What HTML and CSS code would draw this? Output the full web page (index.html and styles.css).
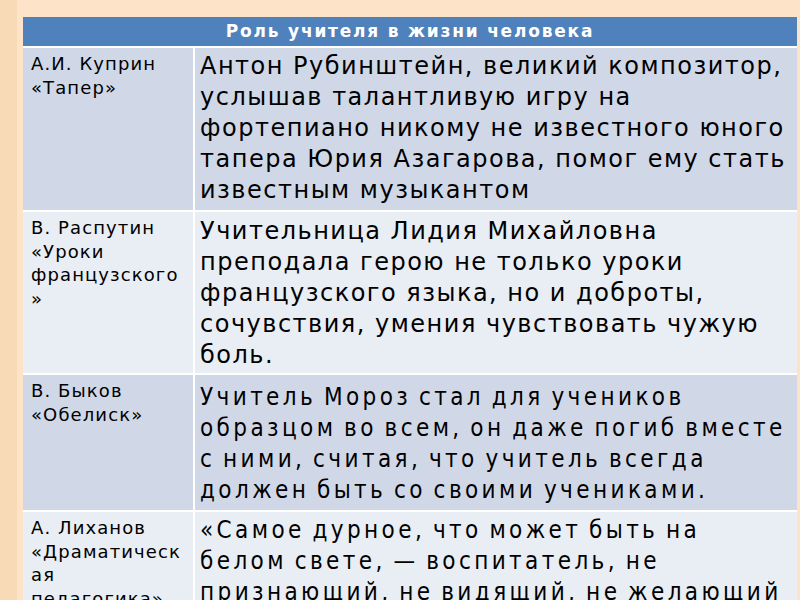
FILE: index.html
```html
<!DOCTYPE html>
<html lang="ru">
<head>
<meta charset="utf-8">
<link rel="stylesheet" href="styles.css">
</head>
<body>
<div class="page">
  <div class="edge"></div>
  <div class="table">
    <div class="head">Роль учителя в жизни человека</div>

    <div class="cell left dark">А.И. Куприн «Тапер»</div>
    <div class="cell right dark">Антон Рубинштейн, великий композитор, услышав талантливую игру на фортепиано никому не известного юного тапера Юрия Азагарова, помог ему стать известным музыкантом</div>

    <div class="cell left light">В. Распутин «Уроки французского»</div>
    <div class="cell right light r2">Учительница Лидия Михайловна преподала герою не только уроки французского языка, но и доброты, сочувствия, умения чувствовать чужую боль.</div>

    <div class="cell left dark">В. Быков «Обелиск»</div>
    <div class="cell right dark cond r3">Учитель Мороз стал для учеников<br>образцом во всем, он даже погиб вместе<br>с ними, считая, что учитель всегда<br>должен быть со своими учениками.</div>

    <div class="cell left light">А. Лиханов «Драматическая педагогика»</div>
    <div class="cell right light cond">«Самое дурное, что может быть на<br>белом свете, — воспитатель, не<br>признающий, не видящий, не желающий</div>
  </div>
</div>
</body>
</html>
```

FILE: styles.css
```css
html, body {
  margin: 0;
  padding: 0;
  width: 800px;
  height: 600px;
  overflow: hidden;
  background: #fde4c8;
}

.page {
  display: flex;
  height: 600px;
  padding-top: 17px;
  box-sizing: border-box;
}

.edge {
  width: 17px;
  margin-top: -17px;
  margin-right: 6px;
  background: #f9dab6;
}

.table {
  width: 774px;
  display: grid;
  grid-template-columns: 170px 602px;
  grid-template-rows: 29px 162px 161px 135px 1fr;
  gap: 2px;
  background: #ffffff;
  font-family: "DejaVu Sans", sans-serif;
  color: #000;
}

.head {
  grid-column: 1 / 3;
  background: #4f81bd;
  color: #ffffff;
  font-weight: bold;
  font-size: 17px;
  line-height: 29px;
  text-align: center;
  letter-spacing: 1.8px;
}

.cell {
  overflow: hidden;
}

.dark { background: #d0d8e8; }
.light { background: #e9edf4; }

.left {
  font-size: 18px;
  line-height: 23.5px;
  padding: 4px 6px 0 8px;
  letter-spacing: 1.1px;
  overflow-wrap: break-word;
}

.right {
  font-size: 24px;
  line-height: 31px;
  padding: 3px 4px 0 5px;
  letter-spacing: 1.5px;
}

.r2 { padding-top: 4px; }

.cond {
  font-family: "DejaVu Sans Condensed", "DejaVu Sans", sans-serif;
  letter-spacing: 3.4px;
  word-spacing: -2.5px;
  white-space: nowrap;
}

.r3 { padding-top: 7px; }
```
